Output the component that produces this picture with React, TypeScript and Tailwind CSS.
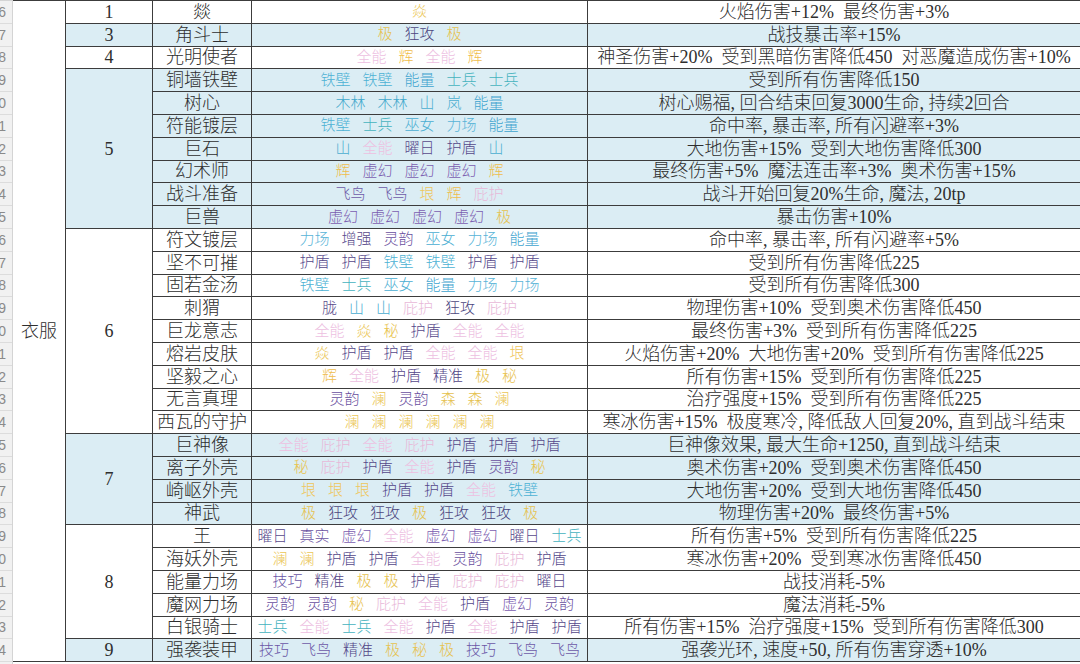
import React from 'react'

type Row = [string, string[], string]

type Group = {
  tier: string
  blue: boolean
  rows: Row[]
}

// one class per gem word, written out so tailwind picks them up
const gemClass: Record<string, string> = {
  焱: 'text-[#ecc85a]',
  极: 'text-[#e6c24f]',
  辉: 'text-[#efbd4d]',
  垠: 'text-[#efc65c]',
  秘: 'text-[#e8c24e]',
  澜: 'text-[#ebc656]',
  森: 'text-[#e5c14f]',
  全能: 'text-[#edc0e1]',
  庇护: 'text-[#e8b8d8]',
  铁壁: 'text-[#4db2d4]',
  士兵: 'text-[#45b3be]',
  能量: 'text-[#3ea4cf]',
  木林: 'text-[#41a8cc]',
  山: 'text-[#4aadd0]',
  岚: 'text-[#4aadd0]',
  巫女: 'text-[#4aaed2]',
  力场: 'text-[#58b4d7]',
  狂攻: 'text-[#4b4680]',
  曜日: 'text-[#58498b]',
  护盾: 'text-[#55478a]',
  增强: 'text-[#5a4c8c]',
  胧: 'text-[#5a4c8c]',
  精准: 'text-[#524586]',
  虚幻: 'text-[#7b5db0]',
  飞鸟: 'text-[#6e5aa8]',
  灵韵: 'text-[#6a4fa0]',
  真实: 'text-[#6a52a2]',
  技巧: 'text-[#6a56a6]',
}

const groups: Group[] = [
  { tier: '1', blue: false, rows: [['燚', ['焱'], '火焰伤害+12% 最终伤害+3%']] },
  { tier: '3', blue: true, rows: [['角斗士', ['极', '狂攻', '极'], '战技暴击率+15%']] },
  {
    tier: '4',
    blue: false,
    rows: [['光明使者', ['全能', '辉', '全能', '辉'], '神圣伤害+20% 受到黑暗伤害降低450 对恶魔造成伤害+10%']],
  },
  {
    tier: '5',
    blue: true,
    rows: [
      ['铜墙铁壁', ['铁壁', '铁壁', '能量', '士兵', '士兵'], '受到所有伤害降低150'],
      ['树心', ['木林', '木林', '山', '岚', '能量'], '树心赐福, 回合结束回复3000生命, 持续2回合'],
      ['符能镀层', ['铁壁', '士兵', '巫女', '力场', '能量'], '命中率, 暴击率, 所有闪避率+3%'],
      ['巨石', ['山', '全能', '曜日', '护盾', '山'], '大地伤害+15% 受到大地伤害降低300'],
      ['幻术师', ['辉', '虚幻', '虚幻', '虚幻', '辉'], '最终伤害+5% 魔法连击率+3% 奥术伤害+15%'],
      ['战斗准备', ['飞鸟', '飞鸟', '垠', '辉', '庇护'], '战斗开始回复20%生命, 魔法, 20tp'],
      ['巨兽', ['虚幻', '虚幻', '虚幻', '虚幻', '极'], '暴击伤害+10%'],
    ],
  },
  {
    tier: '6',
    blue: false,
    rows: [
      ['符文镀层', ['力场', '增强', '灵韵', '巫女', '力场', '能量'], '命中率, 暴击率, 所有闪避率+5%'],
      ['坚不可摧', ['护盾', '护盾', '铁壁', '铁壁', '护盾', '护盾'], '受到所有伤害降低225'],
      ['固若金汤', ['铁壁', '士兵', '巫女', '能量', '力场', '力场'], '受到所有伤害降低300'],
      ['刺猬', ['胧', '山', '山', '庇护', '狂攻', '庇护'], '物理伤害+10% 受到奥术伤害降低450'],
      ['巨龙意志', ['全能', '焱', '秘', '护盾', '全能', '全能'], '最终伤害+3% 受到所有伤害降低225'],
      ['熔岩皮肤', ['焱', '护盾', '护盾', '全能', '全能', '垠'], '火焰伤害+20% 大地伤害+20% 受到所有伤害降低225'],
      ['坚毅之心', ['辉', '全能', '护盾', '精准', '极', '秘'], '所有伤害+15% 受到所有伤害降低225'],
      ['无言真理', ['灵韵', '澜', '灵韵', '森', '森', '澜'], '治疗强度+15% 受到所有伤害降低225'],
      ['西瓦的守护', ['澜', '澜', '澜', '澜', '澜', '澜'], '寒冰伤害+15% 极度寒冷, 降低敌人回复20%, 直到战斗结束'],
    ],
  },
  {
    tier: '7',
    blue: true,
    rows: [
      ['巨神像', ['全能', '庇护', '全能', '庇护', '护盾', '护盾', '护盾'], '巨神像效果, 最大生命+1250, 直到战斗结束'],
      ['离子外壳', ['秘', '庇护', '护盾', '全能', '护盾', '灵韵', '秘'], '奥术伤害+20% 受到奥术伤害降低450'],
      ['崎岖外壳', ['垠', '垠', '垠', '护盾', '护盾', '全能', '铁壁'], '大地伤害+20% 受到大地伤害降低450'],
      ['神武', ['极', '狂攻', '狂攻', '极', '狂攻', '狂攻', '极'], '物理伤害+20% 最终伤害+5%'],
    ],
  },
  {
    tier: '8',
    blue: false,
    rows: [
      ['王', ['曜日', '真实', '虚幻', '全能', '虚幻', '虚幻', '曜日', '士兵'], '所有伤害+5% 受到所有伤害降低225'],
      ['海妖外壳', ['澜', '澜', '护盾', '护盾', '全能', '灵韵', '庇护', '护盾'], '寒冰伤害+20% 受到寒冰伤害降低450'],
      ['能量力场', ['技巧', '精准', '极', '极', '护盾', '庇护', '庇护', '曜日'], '战技消耗-5%'],
      ['魔网力场', ['灵韵', '灵韵', '秘', '庇护', '全能', '护盾', '虚幻', '灵韵'], '魔法消耗-5%'],
      [
        '白银骑士',
        ['士兵', '全能', '士兵', '全能', '护盾', '全能', '护盾', '护盾'],
        '所有伤害+15% 治疗强度+15% 受到所有伤害降低300',
      ],
    ],
  },
  {
    tier: '9',
    blue: true,
    rows: [
      [
        '强袭装甲',
        ['技巧', '飞鸟', '精准', '极', '秘', '极', '技巧', '飞鸟', '飞鸟'],
        '强袭光环, 速度+50, 所有伤害穿透+10%',
      ],
    ],
  },
]

const ROW_COUNT = groups.reduce((n, g) => n + g.rows.length, 0)

// the sheet uses half-width spaces between phrases; a plain space is too narrow here
function spaced(text: string) {
  return text.replace(/(?<!,) /g, '\u2002')
}

function Gutter() {
  const nums = Array.from({ length: ROW_COUNT + 1 }, (_, i) => String(16 + i))
  return (
    <div className="flex w-[13px] shrink-0 flex-col overflow-hidden border-r border-[#d4d4d4] bg-[#f1f1f1]">
      <div className="h-px shrink-0 bg-[#d4d4d4]" />
      {nums.map((n) => (
        <div
          key={n}
          className="flex h-[22.8px] shrink-0 items-center justify-end border-b border-[#dcdcdc] pr-[6px] font-['Liberation_Sans',sans-serif] text-[14px] leading-none text-[#8a8a8a]"
        >
          {n}
        </div>
      ))}
    </div>
  )
}

function Gems({ items }: { items: string[] }) {
  return (
    <div className="flex items-center justify-center gap-[12px] whitespace-nowrap text-[15px] leading-none">
      {items.map((g, i) => (
        <span key={i} className={gemClass[g]}>
          {g}
        </span>
      ))}
    </div>
  )
}

function TierGroup({ group }: { group: Group }) {
  return (
    <div className={`flex ${group.blue ? 'bg-[#dbedf4]' : 'bg-white'}`}>
      <div className="flex w-[87px] shrink-0 items-center justify-center border-r border-b border-[#3c3c3c] text-[18px] leading-none">
        {group.tier}
      </div>
      <div className="flex min-w-0 flex-1 flex-col">
        {group.rows.map(([name, gems, effect]) => (
          <div key={name} className="flex h-[22.8px] shrink-0">
            <div className="flex w-[99px] shrink-0 items-center justify-center border-r border-b border-[#3c3c3c] text-[18px] leading-none whitespace-nowrap">
              {name}
            </div>
            <div className="flex w-[336px] shrink-0 items-center justify-center border-r border-b border-[#3c3c3c]">
              <Gems items={gems} />
            </div>
            <div className="flex min-w-0 flex-1 items-center justify-center border-b border-[#3c3c3c] text-[18px] leading-none whitespace-nowrap">
              {spaced(effect)}
            </div>
          </div>
        ))}
      </div>
    </div>
  )
}

export default function App() {
  return (
    <div className="flex h-[664px] w-[1080px] overflow-hidden bg-white font-['Liberation_Serif','Noto_Sans_CJK_SC',serif] font-light text-[#2e2e2e]">
      <Gutter />
      <div className="flex min-w-0 flex-1 flex-col self-start border-t border-[#3c3c3c]">
        <div className="flex">
          <div className="flex w-[53px] shrink-0 items-center justify-center border-r border-b border-[#3c3c3c] text-[18px] leading-none">
            衣服
          </div>
          <div className="flex min-w-0 flex-1 flex-col">
            {groups.map((g) => (
              <TierGroup key={g.tier} group={g} />
            ))}
          </div>
        </div>
      </div>
    </div>
  )
}
